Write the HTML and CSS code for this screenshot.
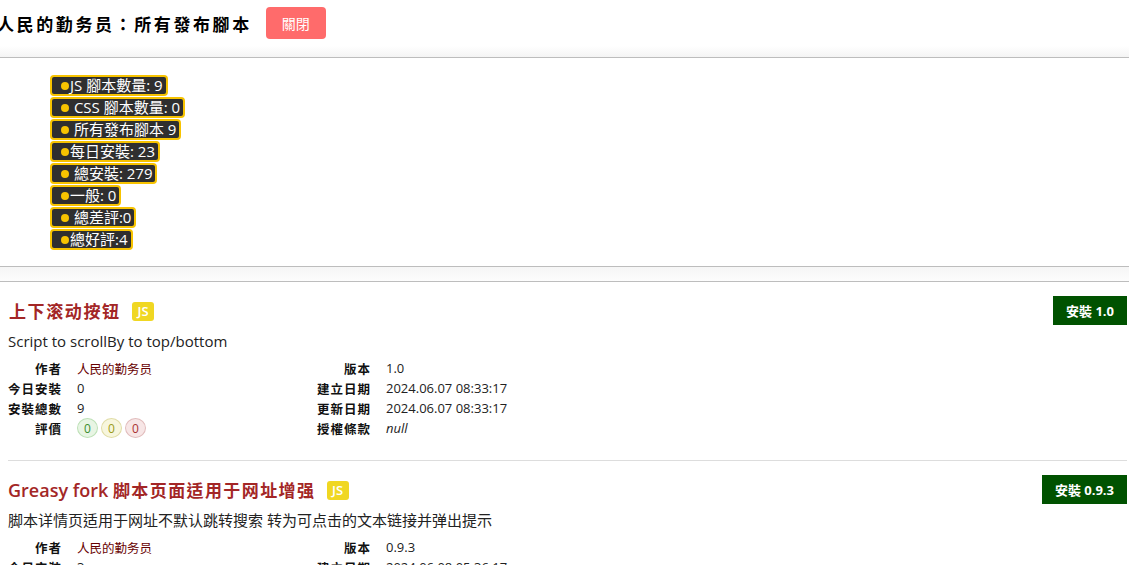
FILE: index.html
```html
<!DOCTYPE html>
<html lang="zh-Hant">
<head>
<meta charset="utf-8">
<title>所有發布腳本</title>
<link rel="stylesheet" href="styles.css">
</head>
<body>
<header class="header">
  <h2 class="page-title">人民的勤务员：所有發布腳本</h2>
  <button class="close-btn">關閉</button>
</header>
<div class="rule-top"></div>
<ul class="stats">
  <li class="stat"><span class="dot"></span>JS 腳本數量: 9</li>
  <li class="stat"><span class="dot"></span> CSS 腳本數量: 0</li>
  <li class="stat"><span class="dot"></span> 所有發布腳本 9</li>
  <li class="stat"><span class="dot"></span>每日安裝: 23</li>
  <li class="stat"><span class="dot"></span> 總安裝: 279</li>
  <li class="stat"><span class="dot"></span>一般: 0</li>
  <li class="stat"><span class="dot"></span> 總差評:0</li>
  <li class="stat"><span class="dot"></span>總好評:4</li>
</ul>
<div class="rule-band"></div>
<section class="scripts">
  <article class="script">
    <div class="script-head">
      <h3 class="script-title">上下滚动按钮 <span class="js-badge">JS</span></h3>
      <a class="install" href="#">安裝 1.0</a>
    </div>
    <p class="desc">Script to scrollBy to top/bottom</p>
    <dl class="meta">
      <div class="meta-col">
        <div class="meta-row"><dt>作者</dt><dd><a class="author">人民的勤务员</a></dd></div>
        <div class="meta-row"><dt>今日安裝</dt><dd>0</dd></div>
        <div class="meta-row"><dt>安裝總數</dt><dd>9</dd></div>
        <div class="meta-row"><dt>評價</dt><dd class="ratings"><span class="r good">0</span><span class="r ok">0</span><span class="r bad">0</span></dd></div>
      </div>
      <div class="meta-col">
        <div class="meta-row"><dt>版本</dt><dd>1.0</dd></div>
        <div class="meta-row"><dt>建立日期</dt><dd>2024.06.07 08:33:17</dd></div>
        <div class="meta-row"><dt>更新日期</dt><dd>2024.06.07 08:33:17</dd></div>
        <div class="meta-row"><dt>授權條款</dt><dd><em>null</em></dd></div>
      </div>
    </dl>
  </article>
  <article class="script">
    <div class="script-head">
      <h3 class="script-title second"><span class="latin">Greasy fork </span>脚本页面适用于网址增强 <span class="js-badge">JS</span></h3>
      <a class="install" href="#">安裝 0.9.3</a>
    </div>
    <p class="desc">脚本详情页适用于网址不默认跳转搜索 转为可点击的文本链接并弹出提示</p>
    <dl class="meta">
      <div class="meta-col">
        <div class="meta-row"><dt>作者</dt><dd><a class="author">人民的勤务员</a></dd></div>
        <div class="meta-row"><dt>今日安裝</dt><dd>3</dd></div>
      </div>
      <div class="meta-col">
        <div class="meta-row"><dt>版本</dt><dd>0.9.3</dd></div>
        <div class="meta-row"><dt>建立日期</dt><dd>2024.06.08 05:36:17</dd></div>
      </div>
    </dl>
  </article>
</section>
</body>
</html>
```

FILE: styles.css
```css
* { box-sizing: border-box; }
html, body { margin: 0; padding: 0; background: #fff; }
body {
  font-family: "Open Sans", "Noto Sans CJK TC", sans-serif;
  color: #333;
  overflow: hidden;
}
.header {
  display: flex;
  align-items: center;
  gap: 14px;
  height: 46px;
}
.page-title {
  margin: 0 0 0 -3px;
  font-family: "Noto Sans CJK TC", sans-serif;
  font-size: 17px;
  font-weight: 700;
  letter-spacing: 2.6px;
  color: #000;
  line-height: 1;
}
.close-btn {
  width: 60px;
  height: 32px;
  border: none;
  border-radius: 4px;
  background: #ff6b6b;
  color: #fff;
  font-family: "Noto Sans CJK TC", sans-serif;
  font-size: 14px;
}
.rule-top {
  height: 12px;
  background: linear-gradient(#fff, #f4f4f4);
  border-bottom: 1px solid #bdbdbd;
}
.stats {
  list-style: none;
  margin: 0;
  padding: 17px 0 0 50px;
  height: 208px;
}
.stat {
  display: flex;
  align-items: center;
  width: max-content;
  height: 21px;
  margin-bottom: 1px;
  padding: 0 3px 0 9px;
  border: 2px solid #f7c300;
  border-radius: 4px;
  background: #2f2f2f;
  color: #fff;
  font-family: "Open Sans", "Noto Sans CJK TC", sans-serif;
  font-size: 15px;
  white-space: pre;
  line-height: 1;
}
.dot {
  width: 8px;
  height: 8px;
  border-radius: 50%;
  background: #f7c300;
  margin-right: 1px;
  flex: none;
}
.rule-band {
  height: 16px;
  border-top: 1px solid #bdbdbd;
  border-bottom: 1px solid #bdbdbd;
  background: linear-gradient(#f6f6f6, #fdfdfd);
}
.scripts { padding: 0 2px 0 8px; }
.script {
  border-bottom: 1px solid #ddd;
  padding: 14px 0 22px;
}
.script + .script { padding-top: 14px; border-bottom: none; }
.script-head {
  display: flex;
  justify-content: space-between;
  align-items: flex-start;
}
.script-title {
  margin: 4px 0 0 1px;
  font-family: "Noto Sans CJK TC", serif;
  font-size: 17px;
  font-weight: 700;
  letter-spacing: 1.6px;
  color: #a32626;
  line-height: 22px;
  display: flex;
  align-items: center;
  white-space: pre;
}
.script-title.second { margin-left: 0; letter-spacing: 1.4px; }
.latin {
  font-family: "Open Sans", sans-serif;
  font-size: 18px;
  font-weight: 600;
  letter-spacing: 0;
}
.js-badge {
  display: inline-flex;
  align-items: center;
  justify-content: center;
  width: 22px;
  height: 19px;
  margin-left: 6px;
  border-radius: 3px;
  background: #f0d722;
  color: #fff;
  font-family: "Open Sans", sans-serif;
  font-size: 13px;
  font-weight: 600;
  letter-spacing: 0;
}
.install {
  display: flex;
  align-items: center;
  height: 29px;
  padding: 0 13px;
  background: #005200;
  color: #fff;
  text-decoration: none;
  font-family: "Open Sans", "Noto Sans CJK TC", sans-serif;
  font-size: 13px;
  font-weight: 700;
}
.desc {
  margin: 6px 0 7px;
  font-size: 15px;
  line-height: 20px;
  color: #222;
}
.meta {
  display: flex;
  margin: 0;
}
.meta-col { width: 308px; }
.meta-row {
  display: flex;
  align-items: center;
  height: 20px;
}
.meta dt {
  width: 54px;
  text-align: right;
  margin-right: 15px;
  font-family: "Noto Sans CJK TC", sans-serif;
  font-size: 12.5px;
  font-weight: 700;
  color: #111;
  letter-spacing: 1px;
  white-space: nowrap;
}
.meta dd {
  margin: 0;
  font-size: 13px;
  color: #222;
}
.meta-col + .meta-col dt { width: 55px; }
.author { color: #670000; font-family: "Noto Sans CJK TC", sans-serif; font-size: 12.5px; }
.ratings { display: flex; gap: 3px; }
.r {
  display: inline-flex;
  align-items: center;
  justify-content: center;
  width: 21px;
  height: 20px;
  border-radius: 50%;
  font-size: 12px;
}
.r.good { background: #e8f5e4; border: 1px solid #bde0b6; color: #3c8d2f; }
.r.ok { background: #f7f6dd; border: 1px solid #e0dca6; color: #9a9a1a; }
.r.bad { background: #f7e6e6; border: 1px solid #e1bcbc; color: #a33; }
em { font-style: italic; }
```
